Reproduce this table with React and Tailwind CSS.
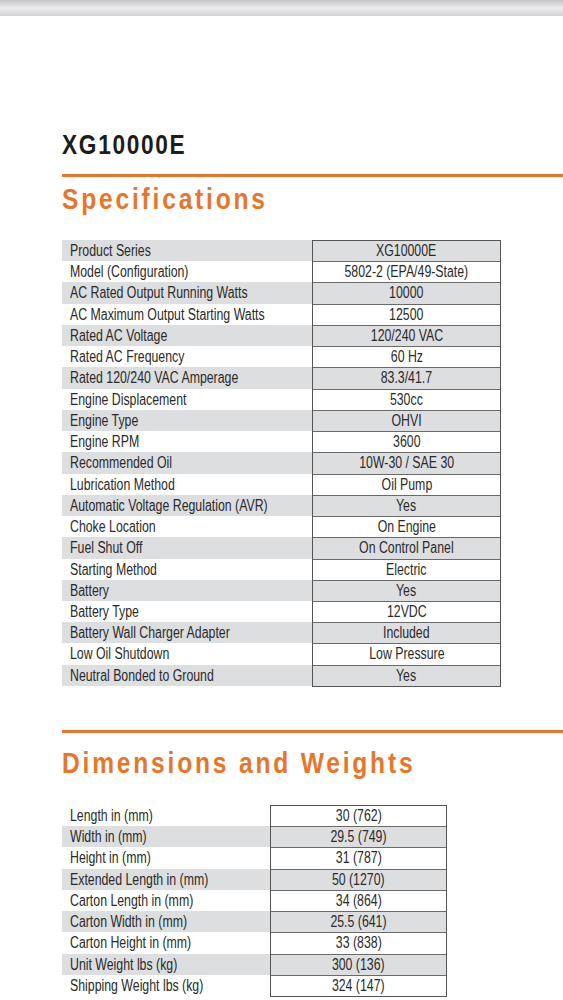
import React from "react";

const specs = [
  ["Product Series", "XG10000E"],
  ["Model (Configuration)", "5802-2 (EPA/49-State)"],
  ["AC Rated Output Running Watts", "10000"],
  ["AC Maximum Output Starting Watts", "12500"],
  ["Rated AC Voltage", "120/240 VAC"],
  ["Rated AC Frequency", "60 Hz"],
  ["Rated 120/240 VAC Amperage", "83.3/41.7"],
  ["Engine Displacement", "530cc"],
  ["Engine Type", "OHVI"],
  ["Engine RPM", "3600"],
  ["Recommended Oil", "10W-30 / SAE 30"],
  ["Lubrication Method", "Oil Pump"],
  ["Automatic Voltage Regulation (AVR)", "Yes"],
  ["Choke Location", "On Engine"],
  ["Fuel Shut Off", "On Control Panel"],
  ["Starting Method", "Electric"],
  ["Battery", "Yes"],
  ["Battery Type", "12VDC"],
  ["Battery Wall Charger Adapter", "Included"],
  ["Low Oil Shutdown", "Low Pressure"],
  ["Neutral Bonded to Ground", "Yes"],
];

const dims = [
  ["Length in (mm)", "30 (762)"],
  ["Width in (mm)", "29.5 (749)"],
  ["Height in (mm)", "31 (787)"],
  ["Extended Length in (mm)", "50 (1270)"],
  ["Carton Length in (mm)", "34 (864)"],
  ["Carton Width in (mm)", "25.5 (641)"],
  ["Carton Height in (mm)", "33 (838)"],
  ["Unit Weight lbs (kg)", "300 (136)"],
  ["Shipping Weight lbs (kg)", "324 (147)"],
];

const font = { fontFamily: '"Liberation Sans", Arial, sans-serif' };

// condensed look: Helvetica Condensed isn't available, so squeeze Arial
const Squeeze = ({ children, center }) => (
  <span
    className={`inline-block whitespace-nowrap scale-x-[0.77] ${
      center ? "origin-center" : "origin-left"
    }`}
  >
    {children}
  </span>
);

const SpecTable = ({ rows, labelW, valueW, grayFirst }) => (
  <div className="flex text-[16px] text-[#2a2a2a]" style={font}>
    <div className={labelW}>
      {rows.map(([label], i) => {
        const gray = grayFirst ? i % 2 === 0 : i % 2 === 1;
        return (
          <div
            key={label}
            className={`h-[21.24px] leading-[21px] pl-2 ${gray ? "bg-[#dddee0]" : ""}`}
          >
            <Squeeze>{label}</Squeeze>
          </div>
        );
      })}
    </div>
    <div className={`${valueW} border border-[#555]`}>
      {rows.map(([label, value], i) => {
        const gray = grayFirst ? i % 2 === 0 : i % 2 === 1;
        return (
          <div
            key={label}
            className={`text-center leading-[20px] ${
              i === 0 ? "h-[20.24px]" : "h-[21.24px] border-t border-[#6a6a6a]"
            } ${gray ? "bg-[#dddee0]" : "bg-white"}`}
          >
            <Squeeze center>{value}</Squeeze>
          </div>
        );
      })}
    </div>
  </div>
);

const Heading = ({ children, className }) => (
  <h2
    className={`text-[30px] leading-none font-bold text-[#e8762a] ${className}`}
    style={font}
  >
    <span className="inline-block whitespace-nowrap scale-x-[0.82] origin-left tracking-[3.4px]">
      {children}
    </span>
  </h2>
);

export default function App() {
  return (
    <div className="min-h-screen bg-white">
      {/* top chrome bar */}
      <div className="h-[16px] bg-gradient-to-b from-[#c4c4c8] via-[#ececee] to-[#d2d2d6]" />

      <div className="pl-[62px]">
        <h1
          className="mt-[116px] text-[27px] leading-none font-bold text-[#1c1c1c]"
          style={font}
        >
          <span className="inline-block scale-x-[0.84] origin-left tracking-[2px]">
            XG10000E
          </span>
        </h1>
        <div className="mt-[15px] h-[3px] bg-[#e8762a]" />
        <Heading className="mt-[7px]">Specifications</Heading>

        <div className="mt-[26px]">
          <SpecTable rows={specs} labelW="w-[250px]" valueW="w-[189px]" grayFirst />
        </div>

        <div className="mt-[43px] h-[3px] bg-[#e8762a]" />
        <Heading className="mt-[15px]">Dimensions and Weights</Heading>

        <div className="mt-[27px]">
          <SpecTable rows={dims} labelW="w-[208px]" valueW="w-[177px]" grayFirst={false} />
        </div>
      </div>
    </div>
  );
}
